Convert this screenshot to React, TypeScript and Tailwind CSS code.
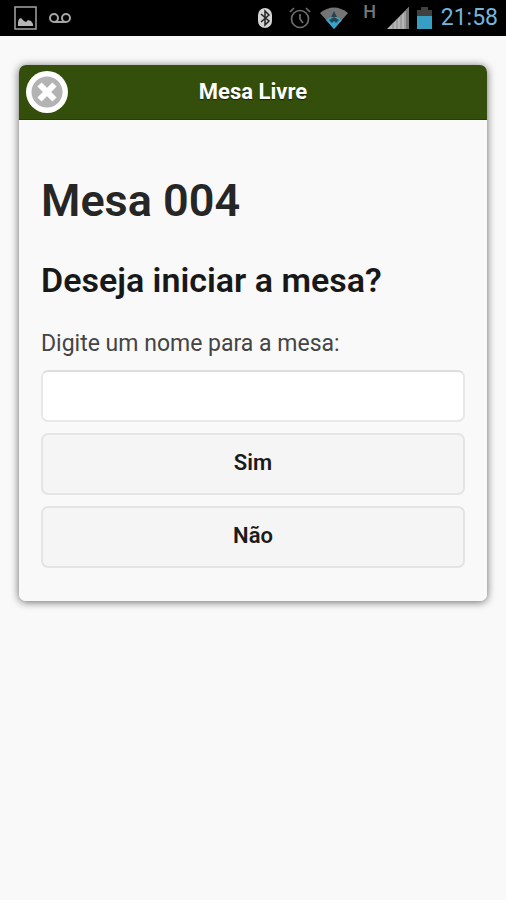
import type { ReactNode } from "react";

function StatusBar() {
  return (
    <div className="flex h-9 items-center justify-between bg-black pl-[14px] pr-2">
      <div className="flex items-center gap-[11px]">
        <svg width="24" height="24" viewBox="0 0 24 24" aria-label="Imagem">
          <rect x="1" y="1" width="21" height="22" fill="none" stroke="#a5a5a5" strokeWidth="1.5" />
          <path d="M4 20v-4l1-3 2-1 3 3 2 1 2-2 3 1 2 3v2z" fill="#b5b5b5" />
        </svg>
        <svg width="24" height="12" viewBox="0 0 24 12" fill="none" stroke="#a5a5a5" strokeWidth="2" aria-label="Correio de voz">
          <circle cx="5" cy="6" r="4" />
          <circle cx="17" cy="6" r="4" />
          <path d="M5 10h12" />
        </svg>
      </div>
      <div className="flex items-center">
        <svg width="16" height="22" viewBox="0 0 16 22" aria-label="Bluetooth">
          <rect x="1" y="1" width="14" height="20" rx="7" fill="#d4d4d4" />
          <path d="M4 7l8 7-4 4V4l4 4-8 7" fill="none" stroke="#222" strokeWidth="1.5" />
        </svg>
        <svg className="ml-4" width="22" height="22" viewBox="0 0 22 22" fill="none" stroke="#6d6d6d" strokeWidth="1.7" aria-label="Alarme">
          <circle cx="11" cy="12" r="8.5" />
          <path d="M11 7v5l3 4M1 5l4-4M21 5l-4-4" />
        </svg>
        <svg className="ml-[9px]" width="28" height="22" viewBox="0 0 28 22" aria-label="Wi-Fi">
          <path d="M0 6Q14-5 28 6L14 22z" fill="#757575" />
          <path d="M6 13Q14 6 22 13L14 22z" fill="#35a4cc" />
          <path d="M14 4l-3 6h6zM9 13l3 3 2-2 2 2 3-3-5-3z" fill="#28454f" />
        </svg>
        <span className="mb-3 ml-[15px] w-[14px] text-center text-[18px] leading-[18px] font-medium text-[#777]">H</span>
        <svg className="ml-[10px]" width="23" height="22" viewBox="0 0 23 22" aria-label="Sinal">
          <path d="M0 22L22 0v22z" fill="#b5b5b5" />
          <path d="M6 16v6M10 12v10M14 8v14M18 4v18" stroke="#888" strokeWidth="1" />
          <path d="M19 3l3-3v22h-3z" fill="#777" />
        </svg>
        <svg className="ml-[7px]" width="15" height="22" viewBox="0 0 15 22" aria-label="Bateria">
          <path d="M0 3h4V0h7v3h4v8H0z" fill="#414141" />
          <path d="M0 9h15v13H0z" fill="#379fc3" />
        </svg>
        <time className="ml-[9px] text-[23px] leading-9 text-[#75b5d8]">21:58</time>
      </div>
    </div>
  );
}

function DialogButton({ children }: { children: ReactNode }) {
  return (
    <button
      type="button"
      className="h-[62px] w-full rounded-[7px] border-2 border-[#e4e4e4] bg-[#f5f5f5] pb-[2px] text-[22px] leading-7 font-semibold text-[#1b1b1b]"
    >
      {children}
    </button>
  );
}

export default function App() {
  return (
    <div className="min-h-screen bg-[#f9f9f9] font-['Roboto',sans-serif] text-[#262626]">
      <StatusBar />
      <main className="px-[19px] pt-[29px]">
        <section
          role="dialog"
          aria-labelledby="dialog-title"
          className="overflow-hidden rounded-[7px] shadow-[0_1px_8px_0_rgba(0,0,0,0.6)]"
        >
          <header className="grid h-[55px] grid-cols-[42px_1fr_42px] items-center border-b border-[#23400b] bg-[#334f0b] px-[7px]">
            <button type="button" aria-label="Fechar">
              <svg width="42" height="42" viewBox="0 0 42 42">
                <circle cx="21" cy="21" r="21" fill="#fff" />
                <circle cx="21" cy="21" r="15.5" fill="#b3b3b3" />
                <path d="M13.5 13.5l15 15M28.500 13.5l-15 15" stroke="#fff" strokeWidth="6" />
              </svg>
            </button>
            <h2
              id="dialog-title"
              className="text-center text-[22px] leading-7 font-bold text-white [text-shadow:0_1px_1px_#152305]"
            >
              Mesa Livre
            </h2>
          </header>
          <div className="bg-[#f9f9f9] px-[22px] pt-[53px] pb-[33px]">
            <h1 className="text-[45px] leading-[56px] font-semibold">Mesa 004</h1>
            <h3 className="mt-[31px] text-[34px] leading-10 font-semibold text-[#181818]">Deseja iniciar a mesa?</h3>
            <form onSubmit={(event) => event.preventDefault()}>
              <label htmlFor="table-name" className="mt-7 block text-[23px] leading-8 text-[#444]">
                Digite um nome para a mesa:
              </label>
              <input
                id="table-name"
                type="text"
                className="mt-[10px] block h-[52px] w-full rounded-[7px] border-2 border-[#e8e8e8] border-t-[#dedede] bg-white px-3 text-[22px] outline-none"
              />
              <div className="mt-[11px] flex flex-col gap-[11px]">
                <DialogButton>Sim</DialogButton>
                <DialogButton>Não</DialogButton>
              </div>
            </form>
          </div>
        </section>
      </main>
    </div>
  );
}
